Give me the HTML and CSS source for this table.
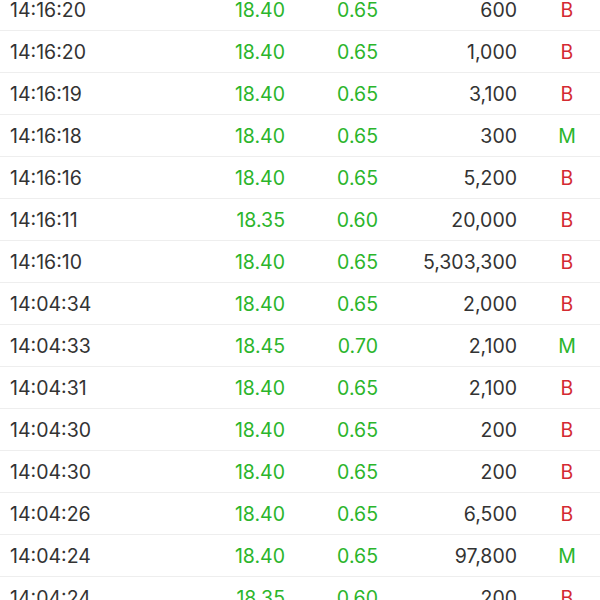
FILE: index.html
```html
<!DOCTYPE html>
<html>
<head>
<meta charset="utf-8">
<link rel="stylesheet" href="styles.css">
</head>
<body>
<div class="list">
  <div class="row"><span class="time">14:16:20</span><span class="num up">18.40</span><span class="num up">0.65</span><span class="num">600</span><span class="side b">B</span></div>
  <div class="row"><span class="time">14:16:20</span><span class="num up">18.40</span><span class="num up">0.65</span><span class="num">1,000</span><span class="side b">B</span></div>
  <div class="row"><span class="time">14:16:19</span><span class="num up">18.40</span><span class="num up">0.65</span><span class="num">3,100</span><span class="side b">B</span></div>
  <div class="row"><span class="time">14:16:18</span><span class="num up">18.40</span><span class="num up">0.65</span><span class="num">300</span><span class="side m">M</span></div>
  <div class="row"><span class="time">14:16:16</span><span class="num up">18.40</span><span class="num up">0.65</span><span class="num">5,200</span><span class="side b">B</span></div>
  <div class="row"><span class="time">14:16:11</span><span class="num up">18.35</span><span class="num up">0.60</span><span class="num">20,000</span><span class="side b">B</span></div>
  <div class="row"><span class="time">14:16:10</span><span class="num up">18.40</span><span class="num up">0.65</span><span class="num">5,303,300</span><span class="side b">B</span></div>
  <div class="row"><span class="time">14:04:34</span><span class="num up">18.40</span><span class="num up">0.65</span><span class="num">2,000</span><span class="side b">B</span></div>
  <div class="row"><span class="time">14:04:33</span><span class="num up">18.45</span><span class="num up">0.70</span><span class="num">2,100</span><span class="side m">M</span></div>
  <div class="row"><span class="time">14:04:31</span><span class="num up">18.40</span><span class="num up">0.65</span><span class="num">2,100</span><span class="side b">B</span></div>
  <div class="row"><span class="time">14:04:30</span><span class="num up">18.40</span><span class="num up">0.65</span><span class="num">200</span><span class="side b">B</span></div>
  <div class="row"><span class="time">14:04:30</span><span class="num up">18.40</span><span class="num up">0.65</span><span class="num">200</span><span class="side b">B</span></div>
  <div class="row"><span class="time">14:04:26</span><span class="num up">18.40</span><span class="num up">0.65</span><span class="num">6,500</span><span class="side b">B</span></div>
  <div class="row"><span class="time">14:04:24</span><span class="num up">18.40</span><span class="num up">0.65</span><span class="num">97,800</span><span class="side m">M</span></div>
  <div class="row"><span class="time">14:04:24</span><span class="num up">18.35</span><span class="num up">0.60</span><span class="num">200</span><span class="side b">B</span></div>
</div>
</body>
</html>
```
FILE: styles.css
```css
html, body {
  margin: 0;
  padding: 0;
  background: #ffffff;
  overflow: hidden;
}
body {
  font-family: "Inter", "Roboto", "Liberation Sans", sans-serif;
  font-size: 19.5px;
  color: #333333;
}
.list {
  margin-top: -11px;
}
.row {
  display: grid;
  grid-template-columns: 195px 80px 93px 139px 17px 66px;
  padding-left: 10px;
  height: 41px;
  align-items: center;
  border-bottom: 1px solid #eeeeee;
}
.time {
  grid-column: 1;
}
.num {
  text-align: right;
}
.up {
  color: #2bb52b;
}
.side {
  grid-column: 6;
  text-align: center;
}
.b {
  color: #d42a32;
}
.m {
  color: #2bb52b;
}
```
